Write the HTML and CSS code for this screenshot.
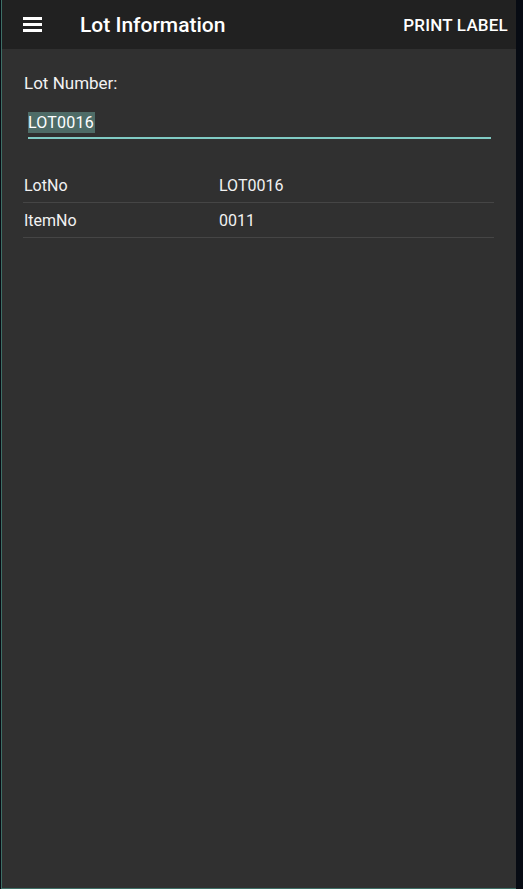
FILE: index.html
```html
<!DOCTYPE html>
<html lang="en">
<head>
    <meta charset="UTF-8">
    <meta name="viewport" content="width=device-width, initial-scale=1.0">
    <title>Lot Information</title>
    <link rel="stylesheet" href="styles.css">
</head>
<body>
<div class="frame">
    <div class="app">
        <!-- 顶部工具栏 -->
        <div class="toolbar">
            <a href="javascript:;" class="menu_btn">
                <svg width="20" height="16" viewBox="0 0 20 16">
                    <rect x="0" y="1" width="19" height="3" fill="#fff"/>
                    <rect x="0" y="7" width="19" height="3" fill="#fff"/>
                    <rect x="0" y="13" width="19" height="3" fill="#fff"/>
                </svg>
            </a>
            <span class="toolbar_title">Lot Information</span>
            <a href="javascript:;" class="toolbar_action">PRINT LABEL</a>
        </div>

        <div class="content">
            <div class="field_label">Lot Number:</div>
            <div class="field_input">
                <span class="selected">LOT0016</span>
            </div>

            <!-- 批次信息 -->
            <div class="info_list">
                <div class="info_row">
                    <span class="info_key">LotNo</span>
                    <span class="info_value">LOT0016</span>
                </div>
                <div class="info_row">
                    <span class="info_key">ItemNo</span>
                    <span class="info_value">0011</span>
                </div>
            </div>
        </div>
    </div>
    <div class="side_strip"></div>
</div>
</body>
</html>
```

FILE: styles.css
```css
*{
    padding: 0;
    margin: 0;
    box-sizing: border-box;
}
html, body{
    height: 100%;
}
body{
    background: #070b13;
    font-family: Roboto, "Liberation Sans", sans-serif;
    color: #fff;
}
.frame{
    display: flex;
    height: 889px;
    padding-left: 1px;
}
.app{
    width: 515px;
    height: 889px;
    display: flex;
    flex-direction: column;
    background: #303030;
    border-left: 1px solid #3e6f66;
    border-bottom: 1px solid #3e6f66;
}
.side_strip{
    flex: 1;
    background: #070b13;
}

/* 工具栏 */
.toolbar{
    height: 49px;
    background: #212121;
    display: flex;
    align-items: center;
    padding: 0 8px 0 21px;
}
.menu_btn{
    display: flex;
    width: 20px;
    height: 16px;
    margin-top: -2px;
}
.toolbar_title{
    margin-left: 37px;
    font-size: 21px;
    font-weight: 500;
    flex: 1;
    margin-top: 1px;
}
.toolbar_action{
    color: #fff;
    text-decoration: none;
    font-size: 17px;
    font-weight: 500;
    letter-spacing: 0.2px;
    margin-top: 1px;
}

/* 内容 */
.content{
    padding: 24px 22px 0 21px;
}
.field_label{
    font-size: 17px;
    color: #f2f2f2;
    line-height: 20px;
    padding-left: 1px;
}
.field_input{
    margin: 17px 3px 0 5px;
    height: 29px;
    border-bottom: 2px solid #80cbc4;
    padding-top: 2px;
}
.selected{
    display: inline-block;
    background: #4e6c67;
    color: #fff;
    font-size: 16px;
    letter-spacing: 0.2px;
    line-height: 21px;
    padding: 0 1px 0 0;
}
.info_list{
    margin-top: 29px;
}
.info_row{
    display: flex;
    align-items: center;
    height: 35px;
    padding-top: 1px;
    border-bottom: 1px solid #454545;
    font-size: 16px;
    color: #f2f2f2;
}
.info_key{
    width: 196px;
    padding-left: 1px;
}
```
